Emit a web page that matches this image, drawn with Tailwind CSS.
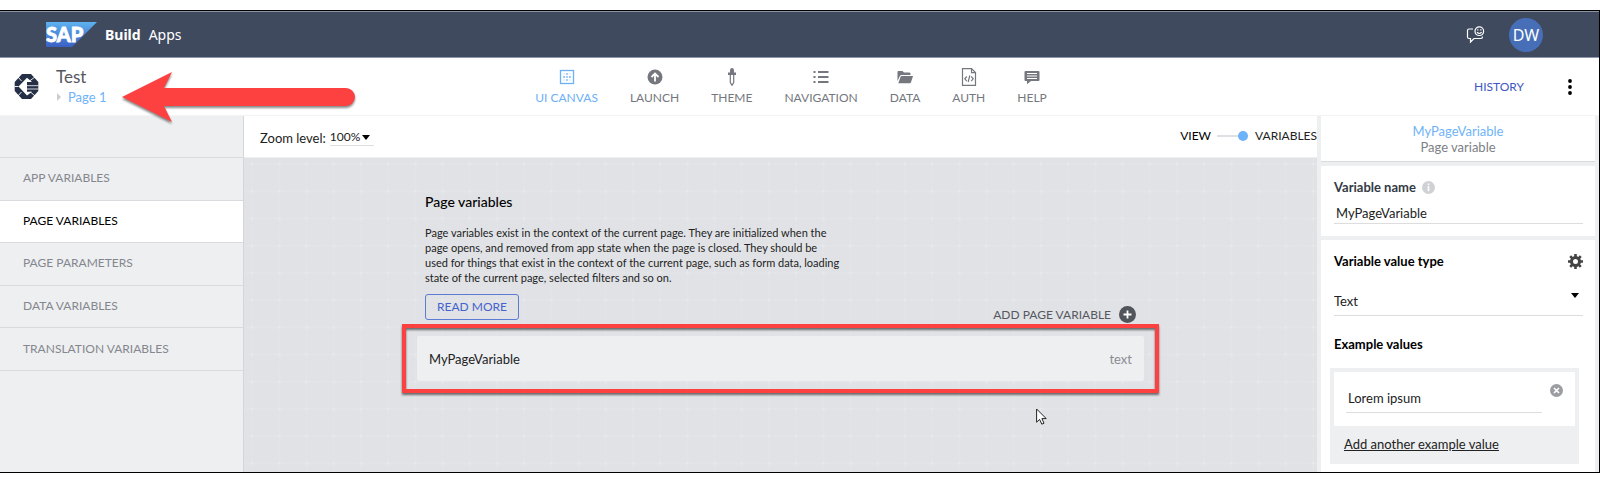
<!DOCTYPE html>
<html lang="en">
<head>
<meta charset="utf-8">
<title>Test – SAP Build Apps</title>
<script src="https://cdn.jsdelivr.net/npm/@tailwindcss/browser@4"></script>
</head>
<body class="bg-white py-2.5 font-['Lato',sans-serif] text-[13px] leading-4 text-[#222]">
<div class="border-y border-r border-black">

  <!-- Shell header -->
  <header class="flex h-[47px] items-center justify-between border-t border-b border-t-[#8b93a1] border-b-[#8f97ac] bg-[#3f4a5f] pl-[46px] pr-14 text-white">
    <div class="flex items-center gap-2 font-['Noto_Sans',sans-serif] text-sm">
      <svg class="h-[25px] w-[51px]" viewBox="0 0 51 25" role="img" aria-label="SAP">
        <defs><linearGradient id="sap" x1="0" y1="0" x2="0" y2="1"><stop offset="0" stop-color="#5eb2ef"/><stop offset="1" stop-color="#3a5fc4"/></linearGradient></defs>
        <path d="M0 0H51L26 25H0Z" fill="url(#sap)"/>
        <text x="0" y="19.500" font-family="Lato" font-weight="900" font-size="20" fill="#fff" stroke="#fff" stroke-width=".8">SAP</text>
      </svg>
      <span class="flex gap-2"><b class="font-bold">Build</b><span>Apps</span></span>
    </div>
    <div class="flex items-center gap-6">
      <button type="button" aria-label="Feedback">
        <svg class="h-[18px] w-[19px]" viewBox="0 0 19 18" fill="none" stroke="#fff" stroke-width="1.2">
          <path d="M7 3H3Q1.500 3 1.500 4.500V11Q1.500 12.500 3 12.500H4.500V16L8 12.500H15Q16.500 12.500 16.500 10.500"/>
          <circle cx="13.300" cy="5.200" r="4.300"/><path d="M11 6.200Q13.300 8.800 15.600 6.200M11.800 3.300V4.600M14.800 3.300V4.600"/>
        </svg>
      </button>
      <button type="button" class="size-[34px] rounded-full bg-[#476fb8] font-['Noto_Sans',sans-serif] text-base">DW</button>
    </div>
  </header>

  <!-- Application bar -->
  <div class="grid h-[58px] grid-cols-[1fr_auto_1fr] items-center border-b border-[#f4f4f5] pr-[17px]">
    <div class="flex items-center gap-[17px] pl-3.5">
      <svg class="h-[27px] w-[25px]" viewBox="0 0 25 27" fill="#252f45">
        <path d="M8 1H17L24.300 9V18L17 26H8L.7 18V9Z"/>
        <path d="M13 4.800L18 9H13V18.800H18L13 22.500L4.500 13.500Z" fill="#fff"/>
        <path d="M13 12.700H24.500M13 16H24.500" stroke="#fff" stroke-width=".8"/>
        <path d="M4 4L7.500 8M21 4L15.500 8M4 23L7.500 19M21 23L16.500 19M.5 13.500H4.500" stroke="#fff" stroke-width=".9"/>
      </svg>
      <div>
        <h1 class="text-[17px] leading-5 text-[#55585f]">Test</h1>
        <a href="#" class="flex items-center gap-1.5 leading-5 text-[#6fb3f8]">
          <svg class="h-2 w-1.5" viewBox="0 0 6 8"><path d="M1 0L5 4L1 8Z" fill="#ccc"/></svg>Page 1</a>
      </div>
    </div>

    <nav class="flex gap-8 text-xs text-[#75777e] [&_a]:flex [&_a]:flex-col [&_a]:items-center [&_a]:gap-1 [&_svg]:size-[18px]">
      <a href="#" class="text-[#6cb0f6]"><svg viewBox="0 0 18 18" fill="none" stroke="currentColor"><rect x="2.500" y="2.500" width="13" height="13" stroke-width="1.300"/><path d="M5.200 9H7M8.200 9H9.800M11 9H12.800M8.200 6H9.800M8.200 12H9.800" stroke-width="1.600"/><path d="M5.200 6H6.800M11.200 6H12.800M5.200 12H6.800M11.200 12H12.800" stroke-width="1" opacity=".4"/></svg>UI CANVAS</a>
      <a href="#"><svg viewBox="0 0 18 18"><circle cx="9" cy="9" r="7.500" fill="currentColor"/><path d="M9 13.500V5.500M5.500 9L9 5.500L12.500 9" fill="none" stroke="#fff" stroke-width="1.800"/></svg>LAUNCH</a>
      <a href="#"><svg viewBox="0 0 18 18"><path d="M7 3Q7 0 9 0T11 3V4.500H13V7H5V4.500H7Z" fill="currentColor"/><path d="M7.300 7V14.500L9 17.300L10.700 14.500V7" fill="none" stroke="currentColor" stroke-width="1.200"/></svg>THEME</a>
      <a href="#"><svg viewBox="0 0 18 18" fill="currentColor"><path d="M6 3H16.500V5H6ZM6 8H16.500V10H6ZM6 13H16.500V15H6ZM1.500 3H3.500V5H1.500ZM1.500 8H3.500V10H1.500ZM1.500 13H3.500V15H1.500Z"/></svg>NAVIGATION</a>
      <a href="#"><svg viewBox="0 0 18 18" fill="currentColor"><path d="M1.500 13V4Q1.500 3 2.500 3H6.500L8 4.500H13.500Q14.500 4.500 14.500 6V7H5.500Q4.300 7 3.800 8.200Z"/><path d="M4.600 8.800Q4.900 8 5.700 8H17L15 14.300Q14.700 15.200 13.800 15.200H2.300Z"/></svg>DATA</a>
      <a href="#"><svg viewBox="0 0 18 18" fill="none" stroke="currentColor" stroke-width="1.200"><path d="M2.500 .6H11.500L15.500 4.600V17.400H2.500ZM11.500 .6V4.600H15.500"/><path d="M6.800 8.500L4.800 10.800L6.800 13.100M11.200 8.500L13.200 10.800L11.200 13.100M9.800 7.500L8.200 14"/></svg>AUTH</a>
      <a href="#"><svg viewBox="0 0 18 18"><path d="M2.500 3H15.500Q16.500 3 16.500 4V12Q16.500 13 15.500 13H8L4 16.200V13H2.500Q1.500 13 1.500 12V4Q1.500 3 2.500 3Z" fill="currentColor"/><path d="M4 5.500H14M4 8H14M4 10.500H14" stroke="#fff" stroke-width="1.100"/></svg>HELP</a>
    </nav>

    <div class="flex items-center justify-end gap-11 pr-2.5">
      <button type="button" class="text-xs text-[#4058c4]">HISTORY</button>
      <button type="button" aria-label="More"><svg class="h-4 w-1" viewBox="0 0 4 16"><circle cx="2" cy="2" r="1.900"/><circle cx="2" cy="8" r="1.900"/><circle cx="2" cy="14" r="1.900"/></svg></button>
    </div>
  </div>

  <div class="flex">
    <!-- Variable scopes -->
    <aside class="w-[244px] shrink-0 border-r border-[#d5d6da] bg-[#eeeff1] pt-[41px] text-xs text-[#85878e]">
      <nav class="grid h-[214px] grid-rows-5 border-t border-[#d9dade] [&_a]:flex [&_a]:items-center [&_a]:border-b [&_a]:border-[#d9dade] [&_a]:pb-px [&_a]:pl-[23px]">
        <a href="#">APP VARIABLES</a>
        <a href="#" class="bg-white text-black" aria-current="page">PAGE VARIABLES</a>
        <a href="#">PAGE PARAMETERS</a>
        <a href="#">DATA VARIABLES</a>
        <a href="#">TRANSLATION VARIABLES</a>
      </nav>
    </aside>

    <main class="flex min-w-0 flex-1 flex-col">
      <div class="flex h-[42px] items-center justify-between border-b border-[#eeeff1] pl-4">
        <div class="flex items-center gap-1 pt-0.5">
          <label for="zoom">Zoom level:</label>
          <div class="relative border-b border-[#ddd]">
            <select id="zoom" class="block w-11 appearance-none bg-transparent text-xs leading-4"><option>100%</option></select>
            <svg class="pointer-events-none absolute top-1.5 right-1 h-[5px] w-2" viewBox="0 0 8 5"><path d="M0 0H8L4 5Z"/></svg>
          </div>
        </div>
        <label class="flex items-center gap-1.5 pb-0.5 text-xs">
          <span class="text-black">VIEW</span>
          <input type="checkbox" checked class="sr-only">
          <svg class="h-2.5 w-8" viewBox="0 0 32 10"><path d="M0 5H24" stroke="#d5d6da" stroke-width="1.500"/><circle cx="26" cy="5" r="5" fill="#6cb3fa"/></svg>
          <span>VARIABLES</span>
        </label>
      </div>

      <div class="relative flex-1 bg-[#e1e2e6]">
        <svg class="absolute inset-0 size-full" aria-hidden="true">
          <defs><pattern id="dots" x="-5.500" y="-7.500" width="27.200" height="27.200" patternUnits="userSpaceOnUse">
            <path d="M0 13.600H27.200" stroke="#e6e7ea" stroke-dasharray="2.500 1.400"/><path d="M13.600 0V27.200" stroke="#e4e5e8" stroke-dasharray="2.500 1.400"/><circle cx="13.600" cy="13.600" r="1.500" fill="#e8e9ec"/>
          </pattern></defs>
          <rect width="100%" height="100%" fill="url(#dots)"/>
        </svg>
        <div class="relative mx-auto max-w-[727px] pt-9">
          <div class="px-2">
            <h2 class="text-sm leading-4 font-medium text-black">Page variables</h2>
            <p class="mt-[15px] max-w-[416px] text-[11px] leading-[15px]">Page variables exist in the context of the current page. They are initialized when the page opens, and removed from app state when the page is closed. They should be used for things that exist in the context of the current page, such as form data, loading state of the current page, selected filters and so on.</p>
            <div class="mt-[9px] flex items-start justify-between">
              <button type="button" class="h-[26px] rounded-[3px] border border-[#5b7bd5] px-[11px] text-xs text-[#4463cc]">READ MORE</button>
              <button type="button" class="mt-3 flex items-center gap-2 text-xs text-[#55585f]">ADD PAGE VARIABLE
                <svg class="size-[17px]" viewBox="0 0 17 17"><circle cx="8.500" cy="8.500" r="8.500" fill="#50545b"/><path d="M8.500 4.500V12.500M4.500 8.500H12.500" stroke="#fff" stroke-width="1.800"/></svg>
              </button>
            </div>
          </div>
          <div class="relative mt-[13px]">
            <a href="#" class="flex h-[45px] items-center justify-between rounded-xs bg-[#eeeff1] px-3"><span>MyPageVariable</span><span class="text-[#8a8c92]">text</span></a>
            <div class="pointer-events-none absolute -inset-x-[15px] -inset-y-3 border-4 border-[#fd4141] drop-shadow-[0_2px_1px_#0008]"></div>
            <!-- Mouse pointer -->
            <svg class="absolute top-[72px] right-[96px] h-[17px] w-3" viewBox="0 0 12 17"><path d="M.6 1V14.200L3.600 11.400L5.800 16.200L8 15.200L5.900 10.600H10.200Z" fill="#fff" stroke="#222"/></svg>
          </div>
        </div>
      </div>
    </main>

    <!-- Properties -->
    <aside class="flex w-[282px] shrink-0 flex-col gap-1 bg-[#eeeff1] px-1">
      <div class="h-[46px] border-b border-[#d9dade] bg-white pt-[7px] text-center">
        <div class="text-[#6fb3f8]">MyPageVariable</div>
        <div class="text-[#7d7f86]">Page variable</div>
      </div>
      <div class="h-[70px] bg-white pt-[13px] pr-3 pl-[13px]">
        <div class="flex items-center gap-1.5">
          <label for="vname" class="font-bold text-[#333a45]">Variable name</label>
          <svg class="size-[13px]" viewBox="0 0 13 13" fill="#fff"><circle cx="6.500" cy="6.500" r="6.500" fill="#d0d1d5"/><path d="M5.700 2.500H7.300V4H5.700ZM5.700 5H7.300V10.200H5.700Z"/></svg>
        </div>
        <input id="vname" value="MyPageVariable" class="mt-2.5 block w-full border-b border-[#ddd] bg-transparent pb-0.5 pl-0.5">
      </div>
      <div class="flex-1 bg-white pr-3 pb-2 pl-[13px] pt-[13px]">
        <div class="flex items-center justify-between font-bold text-black">
          <label for="vtype">Variable value type</label>
          <button type="button" aria-label="Settings"><svg class="size-[15px]" viewBox="0 0 15 15"><circle cx="7.500" cy="7.500" r="4" fill="none" stroke="#444" stroke-width="3"/><path d="M7.500 0V3M7.500 12V15M0 7.500H3M12 7.500H15M2.200 2.200L4.300 4.300M10.700 10.700L12.800 12.800M2.200 12.800L4.300 10.700M10.700 4.300L12.800 2.200" stroke="#444" stroke-width="2.600"/></svg></button>
        </div>
        <div class="relative mt-5 border-b border-[#ddd] pb-1.5 pt-1">
          <select id="vtype" class="block w-full appearance-none bg-transparent leading-4"><option>Text</option></select>
          <svg class="pointer-events-none absolute top-1 right-1 h-[5px] w-2" viewBox="0 0 8 5"><path d="M0 0H8L4 5Z"/></svg>
        </div>
        <h3 class="mt-5 font-bold text-black">Example values</h3>
        <div class="-ml-1 mt-4 mr-1 bg-[#eeeff1] p-1">
          <div class="flex h-[54px] gap-2 bg-white pt-3 pr-3 pl-3">
            <input aria-label="Example value" value="Lorem ipsum" class="mt-1.5 h-[23px] w-0 flex-1 border-b border-[#ddd] bg-transparent pb-1.5 pl-0.5">
            <button type="button" aria-label="Remove" class="self-start"><svg class="block size-[13px]" viewBox="0 0 13 13"><circle cx="6.500" cy="6.500" r="6.500" fill="#9b9da3"/><path d="M4 4L9 9M9 4L4 9" stroke="#fff" stroke-width="1.700"/></svg></button>
          </div>
          <a href="#" class="mt-2.5 mb-2 ml-2.5 block underline">Add another example value</a>
        </div>
      </div>
    </aside>
  </div>
</div>

<!-- Callout arrow -->
<svg class="pointer-events-none absolute top-[68px] left-[117px] h-[60px] w-[244px] drop-shadow-[0_2px_1px_#0007]" viewBox="0 0 244 60" fill="#fd4141"><path d="M5 29L55 4L47 20H229A9 9 0 0 1 229 38H47L55 54Z"/></svg>
</body>
</html>
